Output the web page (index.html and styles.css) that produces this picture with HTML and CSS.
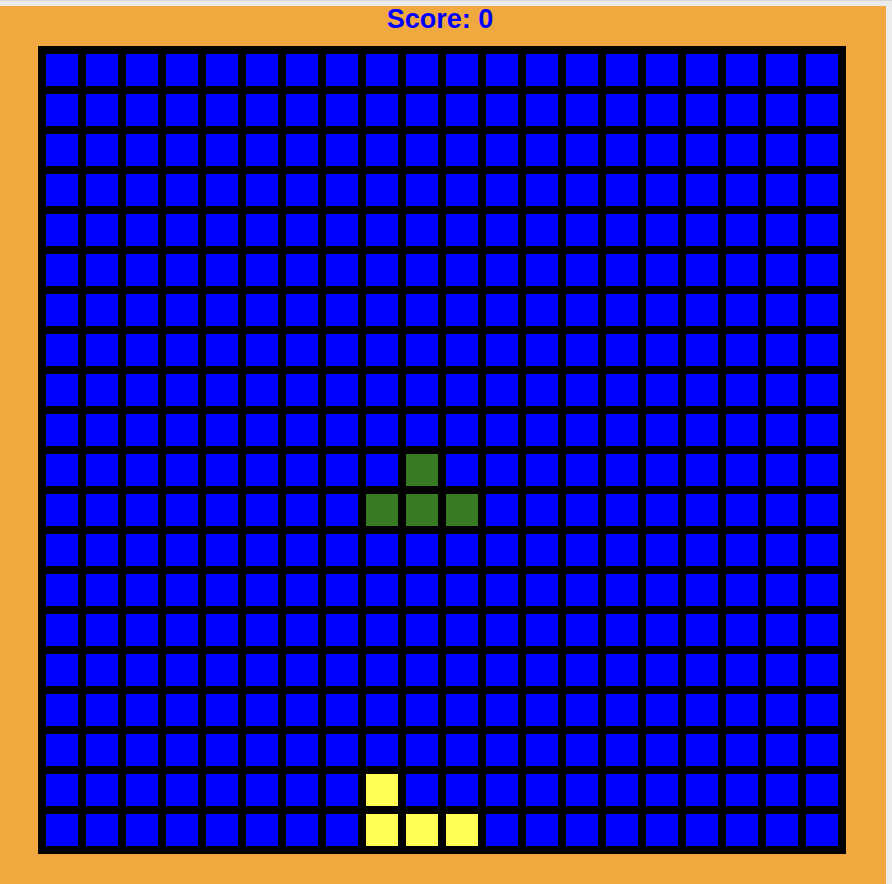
FILE: index.html
```html
<!DOCTYPE html>
<html>
<head>
    <title>Tetris</title>
    <link rel="stylesheet" href="styles.css">
</head>
<body>
    <div class="game">
        <div class="header">
            <h1 class="score">Score: <span id="score">0</span></h1>
        </div>
        <div id="board" class="board"></div>
    </div>

    <script>
        const ROWS = 20;
        const COLS = 20;

        // falling piece and the piece at the bottom
        const piece = [[10, 9], [11, 8], [11, 9], [11, 10]];
        const landed = [[18, 8], [19, 8], [19, 9], [19, 10]];

        function has(list, r, c) {
            return list.some(p => p[0] === r && p[1] === c);
        }

        const board = document.getElementById('board');
        for (let r = 0; r < ROWS; r++) {
            for (let c = 0; c < COLS; c++) {
                const cell = document.createElement('div');
                cell.classList.add('cell');
                if (has(piece, r, c)) {
                    cell.classList.add('active');
                } else if (has(landed, r, c)) {
                    cell.classList.add('fixed');
                }
                board.appendChild(cell);
            }
        }
    </script>
</body>
</html>
```

FILE: styles.css
```css
html, body {
    margin: 0;
    padding: 0;
}

body {
    background-color: #ececec;
    border-top: 1px solid #d6d6d6;
    padding-top: 5px;
    padding-right: 6px;
    font-family: "Liberation Sans", Arial, sans-serif;
}

.game {
    background-color: #f0a93e;
    height: 878px;
}

.header {
    height: 40px;
}

.score {
    margin: 0;
    padding-right: 6px;
    font-size: 27px;
    line-height: 26px;
    font-weight: 700;
    color: #0000ff;
    text-align: center;
}

.board {
    margin-left: 38px;
    width: 808px;
    box-sizing: border-box;
    padding: 8px;
    background-color: #000000;
    display: grid;
    grid-template-columns: repeat(20, 32px);
    grid-auto-rows: 32px;
    gap: 8px;
}

.cell {
    background-color: #0000ff;
}

.cell.active {
    background-color: #377a23;
}

.cell.fixed {
    background-color: #ffff55;
}
```
